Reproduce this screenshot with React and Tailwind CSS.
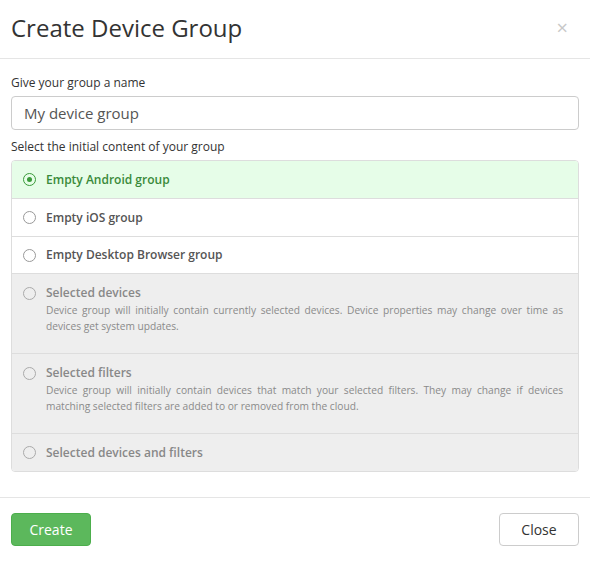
import React from "react";

function Radio({ checked, color }) {
  return (
    <span
      className={`flex h-[13px] w-[13px] shrink-0 items-center justify-center rounded-full border ${color}`}
    >
      {checked && <span className="h-[5px] w-[5px] rounded-full bg-[#3a9a3a]" />}
    </span>
  );
}

export default function App() {
  const font = { fontFamily: '"Open Sans", "Noto Sans", sans-serif' };
  return (
    <div className="h-[569px] w-[590px] bg-white text-[#333]" style={font}>
      <div className="flex h-[59px] items-center justify-between border-b border-[#e5e5e5] pb-[2px] pl-[11px] pr-[22px]">
        <h1 className="text-[24px] leading-none text-[#333]">Create Device Group</h1>
        <span className="text-[20px] leading-none text-[#c8c8c8]">×</span>
      </div>
      <div className="px-[11px] pt-[15px] pb-[25px]">
        <div className="text-[12px] leading-[18px] text-[#333]">Give your group a name</div>
        <div className="mt-[4px] flex h-[34px] items-center rounded-[4px] border border-[#ccc] px-[12px] text-[15px] text-[#555]">
          My device group
        </div>
        <div className="mt-[8px] text-[12px] leading-[18px] text-[#333]">
          Select the initial content of your group
        </div>
        <div className="mt-[4px] overflow-hidden rounded-[4px] border border-[#ddd] text-[12px]">
          <div className="flex h-[38px] items-center gap-[10px] border-b border-[#ddd] bg-[#e6fde8] pl-[11px] font-semibold text-[#3a8a3a]">
            <Radio checked color="border-[#3a9a3a]" />
            <span>Empty Android group</span>
          </div>
          <div className="flex h-[38px] items-center gap-[10px] border-b border-[#ddd] bg-white pl-[11px] font-semibold text-[#555]">
            <Radio color="border-[#999]" />
            <span>Empty iOS group</span>
          </div>
          <div className="flex h-[37px] items-center gap-[10px] border-b border-[#ddd] bg-white pl-[11px] font-semibold text-[#555]">
            <Radio color="border-[#999]" />
            <span>Empty Desktop Browser group</span>
          </div>
          <div className="h-[80px] border-b border-[#ddd] bg-[#eee] pl-[11px] pr-[15px] pt-[10px]">
            <div className="flex items-center gap-[10px] font-semibold text-[#888]">
              <Radio color="border-[#aaa]" />
              <span>Selected devices</span>
            </div>
            <p className="ml-[23px] text-justify text-[10.2px] leading-[16px] text-[#8a8a8a]">
              Device group will initially contain currently selected devices. Device properties may change over time as devices get system updates.
            </p>
          </div>
          <div className="h-[80px] border-b border-[#ddd] bg-[#eee] pl-[11px] pr-[15px] pt-[10px]">
            <div className="flex items-center gap-[10px] font-semibold text-[#888]">
              <Radio color="border-[#aaa]" />
              <span>Selected filters</span>
            </div>
            <p className="ml-[23px] text-justify text-[10.2px] leading-[16px] text-[#8a8a8a]">
              Device group will initially contain devices that match your selected filters. They may change if devices matching selected filters are added to or removed from the cloud.
            </p>
          </div>
          <div className="flex h-[37px] items-center gap-[10px] bg-[#eee] pl-[11px] font-semibold text-[#888]">
            <Radio color="border-[#aaa]" />
            <span>Selected devices and filters</span>
          </div>
        </div>
      </div>
      <div className="flex items-center justify-between border-t border-[#e5e5e5] px-[11px] pt-[15px]">
        <button className="h-[33px] w-[80px] rounded-[4px] border border-[#4cae4c] bg-[#5cb85c] text-[14px] text-white">
          Create
        </button>
        <button className="h-[33px] w-[80px] rounded-[4px] border border-[#ccc] bg-white text-[14px] text-[#333]">
          Close
        </button>
      </div>
    </div>
  );
}
